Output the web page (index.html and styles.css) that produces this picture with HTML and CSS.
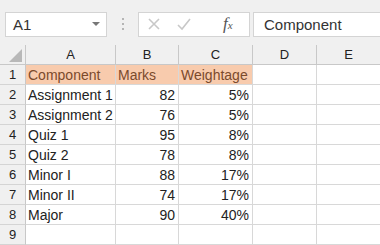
FILE: index.html
```html
<html>
    <head>
        <title>Marks Sheet</title>
        <link rel="stylesheet" href="styles.css">
    </head>
    <body>
        <div class="toolbar">
            <div class="name-box">
                <span>A1</span>
                <span class="caret"></span>
            </div>
            <div class="grip">
                <span></span><span></span><span></span>
            </div>
            <div class="fx-buttons">
                <svg class="fx-btn" width="16" height="16" viewBox="0 0 16 16">
                    <path d="M3 3 L13 13 M13 3 L3 13" stroke="#c8c8c8" stroke-width="1.6" fill="none"/>
                </svg>
                <svg class="fx-btn" width="16" height="16" viewBox="0 0 16 16">
                    <path d="M2 9 L6 13 L14 3" stroke="#c8c8c8" stroke-width="1.6" fill="none"/>
                </svg>
                <span class="fx">f<small>x</small></span>
            </div>
            <div class="formula">Component</div>
        </div>
        <div class="sheet">
            <div class="corner"><span class="tri"></span></div>
            <div class="col-head">A</div>
            <div class="col-head">B</div>
            <div class="col-head">C</div>
            <div class="col-head">D</div>
            <div class="col-head">E</div>

            <div class="row-head">1</div>
            <div class="cell head-fill">Component</div>
            <div class="cell head-fill">Marks</div>
            <div class="cell head-fill">Weightage</div>
            <div class="cell"></div>
            <div class="cell"></div>

            <div class="row-head">2</div>
            <div class="cell">Assignment 1</div>
            <div class="cell num">82</div>
            <div class="cell num">5%</div>
            <div class="cell"></div>
            <div class="cell"></div>

            <div class="row-head">3</div>
            <div class="cell">Assignment 2</div>
            <div class="cell num">76</div>
            <div class="cell num">5%</div>
            <div class="cell"></div>
            <div class="cell"></div>

            <div class="row-head">4</div>
            <div class="cell">Quiz 1</div>
            <div class="cell num">95</div>
            <div class="cell num">8%</div>
            <div class="cell"></div>
            <div class="cell"></div>

            <div class="row-head">5</div>
            <div class="cell">Quiz 2</div>
            <div class="cell num">78</div>
            <div class="cell num">8%</div>
            <div class="cell"></div>
            <div class="cell"></div>

            <div class="row-head">6</div>
            <div class="cell">Minor I</div>
            <div class="cell num">88</div>
            <div class="cell num">17%</div>
            <div class="cell"></div>
            <div class="cell"></div>

            <div class="row-head">7</div>
            <div class="cell">Minor II</div>
            <div class="cell num">74</div>
            <div class="cell num">17%</div>
            <div class="cell"></div>
            <div class="cell"></div>

            <div class="row-head">8</div>
            <div class="cell">Major</div>
            <div class="cell num">90</div>
            <div class="cell num">40%</div>
            <div class="cell"></div>
            <div class="cell"></div>

            <div class="row-head">9</div>
            <div class="cell"></div>
            <div class="cell"></div>
            <div class="cell"></div>
            <div class="cell"></div>
            <div class="cell"></div>
        </div>
    </body>
</html>
```

FILE: styles.css
```css
* {
    margin: 0;
    box-sizing: border-box;
}

body {
    width: 380px;
    height: 245px;
    overflow: hidden;
    background-color: #ffffff;
    font-family: "Liberation Sans", Arial, sans-serif;
    color: #222222;
}

.toolbar {
    display: flex;
    align-items: center;
    height: 45px;
    padding: 3px 0 0 5px;
    background-color: #f0f0f0;
}

.name-box {
    display: flex;
    align-items: center;
    justify-content: space-between;
    width: 102px;
    height: 25px;
    padding: 0 6px 0 7px;
    background-color: white;
    border: 1px solid #d4d4d4;
    font-size: 15px;
    color: #333333;
}

.caret {
    width: 0;
    height: 0;
    border-left: 4px solid transparent;
    border-right: 4px solid transparent;
    border-top: 4px solid #777777;
}

.grip {
    display: flex;
    flex-direction: column;
    gap: 3px;
    width: 31px;
    align-items: center;
}

.grip span {
    width: 2px;
    height: 2px;
    background-color: #b5b5b5;
}

.fx-buttons {
    display: flex;
    align-items: center;
    width: 112px;
    height: 25px;
    padding-left: 7px;
    background-color: white;
    border: 1px solid #d4d4d4;
}

.fx-btn {
    margin-right: 14px;
}

.fx {
    margin-left: 17px;
    font-family: "Liberation Serif", serif;
    font-style: italic;
    font-size: 17px;
    color: #555555;
}

.fx small {
    font-size: 11px;
}

.formula {
    flex: 1;
    height: 25px;
    margin-left: 3px;
    padding: 3px 0 0 10px;
    background-color: white;
    border: 1px solid #d4d4d4;
    border-right: none;
    font-size: 15px;
    color: #333333;
}

.sheet {
    display: grid;
    grid-template-columns: 26px 90px 63px 74px 64px 64px;
    grid-template-rows: 20px;
    grid-auto-rows: 20px;
}

.corner {
    position: relative;
    background-color: #f0f0f0;
    border-right: 1px solid #c8c8c8;
    border-bottom: 1px solid #c8c8c8;
}

.tri {
    position: absolute;
    right: 3px;
    bottom: 2px;
    width: 0;
    height: 0;
    border-left: 13px solid transparent;
    border-bottom: 13px solid #b8b8b8;
}

.col-head {
    display: flex;
    align-items: center;
    justify-content: center;
    background-color: #f0f0f0;
    border-right: 1px solid #c8c8c8;
    border-bottom: 1px solid #c8c8c8;
    font-size: 13px;
    color: #222222;
}

.row-head {
    display: flex;
    align-items: center;
    justify-content: center;
    background-color: #f0f0f0;
    border-right: 1px solid #c8c8c8;
    border-bottom: 1px solid #d4d4d4;
    font-size: 13px;
    color: #222222;
}

.cell {
    display: flex;
    align-items: center;
    padding: 0 3px 0 2px;
    border-right: 1px solid #d8d8d8;
    border-bottom: 1px solid #d8d8d8;
    font-size: 14px;
    white-space: nowrap;
    overflow: hidden;
}

.num {
    justify-content: flex-end;
}

.head-fill {
    background-color: #f8cbad;
    color: #7b4a2c;
}
```
